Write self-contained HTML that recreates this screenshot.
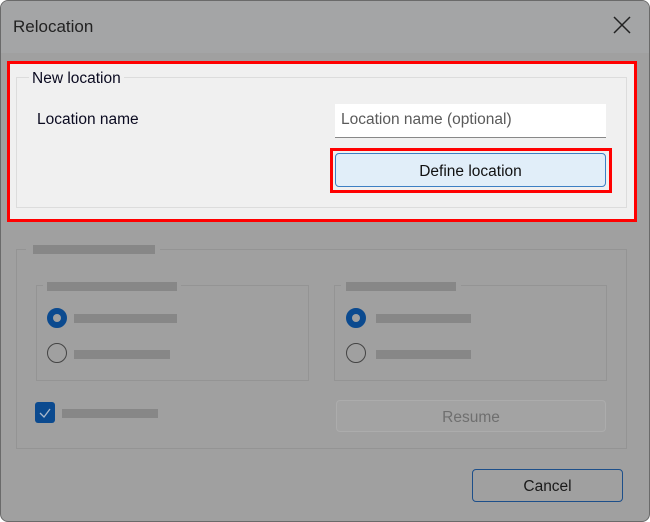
<!DOCTYPE html>
<html><head><meta charset="utf-8"><style>
*{margin:0;padding:0;box-sizing:border-box}
body{width:650px;height:522px;background:#fff;overflow:hidden;font-family:"Liberation Sans",sans-serif;position:relative}
.dlg{position:absolute;left:0;top:0;width:650px;height:522px;background:#a0a0a0;border:1px solid #6a6a6a;border-radius:8px;overflow:hidden}
.title{position:absolute;left:0;top:0;width:650px;height:52px;background:#a4a5a6}
.ab{position:absolute}
.t{position:absolute;font-size:15.5px;color:#1a1a1a;white-space:nowrap;line-height:20px}
.bar{position:absolute;background:#878787;height:9px}
.gb{position:absolute;border:1px solid #949494}
.radio{position:absolute;width:20px;height:20px;border-radius:50%}
</style></head><body>
<div class="dlg">
<div class="title"></div>
</div>
<div class="t" style="left:13px;top:17px;font-size:17px;color:#222">Relocation</div>
<svg class="ab" style="left:612px;top:15px" width="20" height="20"><path d="M2 2L18 18M18 2L2 18" stroke="#222" stroke-width="1.5"/></svg>

<div class="ab" style="left:7px;top:61px;width:630px;height:161px;border:3px solid #f00;background:#f0f0f0"></div>
<div class="ab" style="left:16px;top:77px;width:611px;height:131px;border:1px solid #dcdcdc"></div>
<div class="ab t" style="left:29px;top:69px;background:#f0f0f0;padding:0 3px;color:#0a0a20">New location</div>
<div class="t" style="left:37px;top:110px;color:#0a0a20">Location name</div>
<div class="ab" style="left:335px;top:104px;width:271px;height:34px;background:#fff;border-bottom:1px solid #888"></div>
<div class="t" style="left:341px;top:110px;color:#5a5a5a">Location name (optional)</div>
<div class="ab" style="left:330px;top:148px;width:282px;height:45px;border:3px solid #f00"></div>
<div class="ab" style="left:335px;top:153px;width:271px;height:34px;background:#e1eef9;border:1px solid #3c7fc4;border-radius:4px"></div>
<div class="t" style="left:335px;top:162px;width:271px;text-align:center;color:#111">Define location</div>

<div class="gb" style="left:16px;top:249px;width:611px;height:200px"></div>
<div class="ab" style="left:26px;top:243px;width:134px;height:12px;background:#a0a0a0"></div>
<div class="bar" style="left:33px;top:245px;width:122px"></div>
<div class="gb" style="left:36px;top:285px;width:273px;height:96px"></div>
<div class="ab" style="left:43px;top:279px;width:138px;height:12px;background:#a0a0a0"></div>
<div class="bar" style="left:47px;top:282px;width:130px"></div>
<div class="gb" style="left:334px;top:285px;width:273px;height:96px"></div>
<div class="ab" style="left:341px;top:279px;width:120px;height:12px;background:#a0a0a0"></div>
<div class="bar" style="left:346px;top:282px;width:110px"></div>

<div class="radio" style="left:47px;top:308px;background:#0b4a8f;border:6px solid #0b4a8f"><div style="width:8px;height:8px;border-radius:50%;background:#a0a0a0"></div></div>
<div class="bar" style="left:74px;top:314px;width:103px"></div>
<div class="radio" style="left:47px;top:343px;border:1.5px solid #444"></div>
<div class="bar" style="left:74px;top:350px;width:96px"></div>
<div class="radio" style="left:346px;top:308px;background:#0b4a8f;border:6px solid #0b4a8f"><div style="width:8px;height:8px;border-radius:50%;background:#a0a0a0"></div></div>
<div class="bar" style="left:376px;top:314px;width:95px"></div>
<div class="radio" style="left:346px;top:343px;border:1.5px solid #444"></div>
<div class="bar" style="left:376px;top:350px;width:95px"></div>

<div class="ab" style="left:35px;top:402px;width:20px;height:21px;background:#0b4a8f;border-radius:3px"></div>
<svg class="ab" style="left:35px;top:402px" width="20" height="21"><path d="M5 11L9 15L15 7" stroke="#a9b9cc" stroke-width="1.3" fill="none"/></svg>
<div class="bar" style="left:62px;top:409px;width:96px"></div>

<div class="ab" style="left:336px;top:400px;width:270px;height:32px;background:#a3a3a3;border:1px solid #acacac;border-radius:4px"></div>
<div class="t" style="left:336px;top:408px;width:270px;text-align:center;color:#6f6f6f">Resume</div>
<div class="ab" style="left:472px;top:469px;width:151px;height:33px;border:1.5px solid #1d4f8a;border-radius:4px"></div>
<div class="t" style="left:472px;top:477px;width:151px;text-align:center;color:#1a1a1a">Cancel</div>
</body></html>
